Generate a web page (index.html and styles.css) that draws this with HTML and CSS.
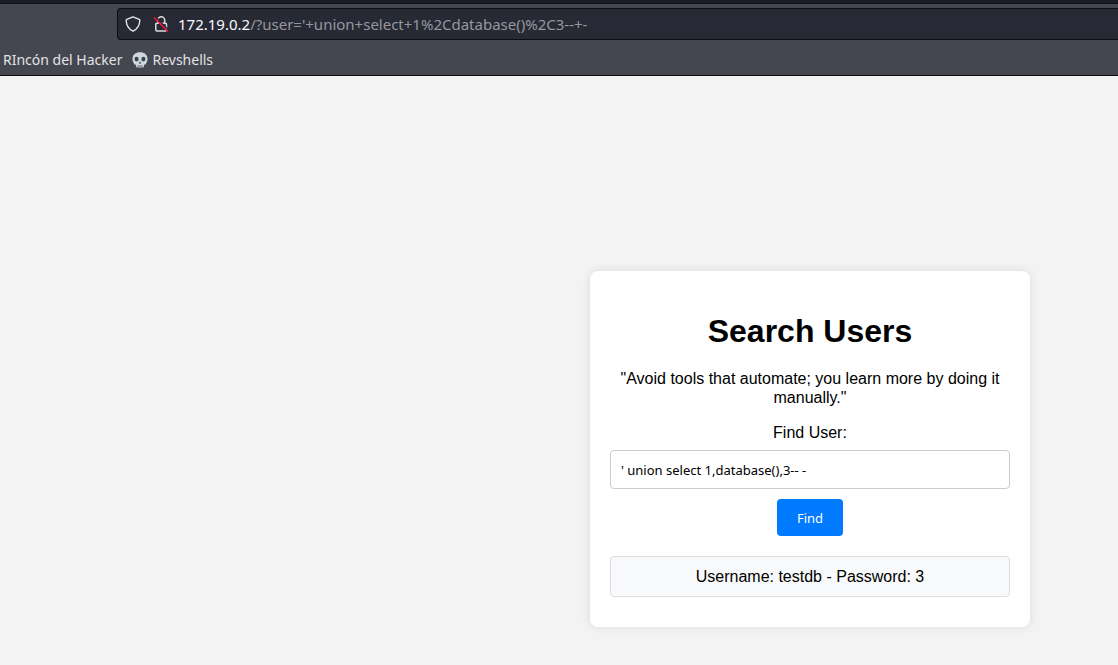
FILE: index.html
```html
<!DOCTYPE html>
<html lang="en">
<head>
<meta charset="utf-8">
<title>Search Users</title>
<link rel="stylesheet" href="styles.css">
</head>
<body>
<header class="browser">
  <div class="toolbar">
    <div class="urlbar">
      <span class="indicators">
        <svg class="icon" viewBox="0 0 16 16" aria-hidden="true">
          <path d="M8 .8 14.2 3.3c.5.2.6.5.6 1-.1 4.8-1.700 8.500-6.800 10.900C2.900 12.800 1.300 9.100 1.200 4.300c0-.5.1-.8.6-1Z" fill="none" stroke="#e4e4e6" stroke-width="1.400" stroke-linejoin="round"/>
        </svg>
        <svg class="icon" viewBox="0 0 16 16" aria-hidden="true">
          <path d="M4.700 7V4.200a3.500 3.500 0 0 1 7 0V7M3.800 7.200h8.700a1 1 0 0 1 1 1v5.800a1 1 0 0 1-1 1H3.800a1 1 0 0 1-1-1V8.200a1 1 0 0 1 1-1Z" fill="none" stroke="#dcdcdf" stroke-width="1.500"/>
          <path d="M2 .4 15.800 14.300" stroke="#272a35" stroke-width="1.400"/>
          <path d="M.8 1.300 14.800 15.500" stroke="#f0133f" stroke-width="1.600"/>
        </svg>
      </span>
      <span class="url"><span class="host">172.19.0.2</span>/?user='+union+select+1%2Cdatabase()%2C3--+-</span>
    </div>
  </div>
  <nav class="bookmarks" aria-label="Bookmarks">
    <a href="#">RIncón del Hacker</a>
    <a href="#">
      <svg class="icon" viewBox="0 0 16 16" aria-hidden="true">
        <path d="M8 .2C3.500.2.500 2.800.500 6.800c0 1.800.4 3 1.100 3.900.4.500.3 1.200.7 1.500.5.400 1.300.2 1.600.7.300.6.100 1.900.5 2.400.6.600 6.600.6 7.200 0 .4-.5.200-1.800.5-2.400.3-.5 1.100-.3 1.600-.7.400-.3.300-1 .7-1.500.7-.9 1.100-2.100 1.100-3.900C15.500 2.800 12.500.2 8 .2Z" fill="#cfd8dd"/>
        <ellipse cx="4.600" cy="7.100" rx="2.100" ry="2.300" fill="#37474f"/>
        <ellipse cx="11.400" cy="7.100" rx="2.100" ry="2.300" fill="#37474f"/>
        <path d="m8 9.300 1.300 2.100H6.700ZM5.700 13.300h.8v2.500h-.8zM7.600 13.300h.8v2.500h-.8zM9.500 13.300h.8v2.500h-.8z" fill="#37474f"/>
      </svg>
      Revshells
    </a>
  </nav>
</header>
<main class="page">
  <section class="card">
    <h1>Search Users</h1>
    <p>"Avoid tools that automate; you learn more by doing it manually."</p>
    <form class="search">
      <label for="user">Find User:</label>
      <input type="text" id="user" name="user" value="' union select 1,database(),3-- -">
      <button type="button">Find</button>
    </form>
    <div class="result">Username: testdb - Password: 3</div>
  </section>
</main>
</body>
</html>
```

FILE: styles.css
```css
* {
  box-sizing: border-box;
}

body {
  margin: 0;
  min-height: 100vh;
  background: #f3f3f3;
  color: #000;
  font: 16px/19px "Liberation Sans", Arial, sans-serif;
}

.browser {
  border-top: 3px solid #1b1c24;
  border-bottom: 1px solid #0c0c12;
  background: #44474f;
  font-family: "Noto Sans", sans-serif;
}

.toolbar {
  padding: 4px 0 4px 117px;
  border-top: 1px solid #101116;
}

.urlbar {
  display: flex;
  align-items: center;
  gap: 9px;
  height: 32px;
  padding-left: 7px;
  border: 1px solid #0d0e14;
  border-right: 0;
  border-radius: 4px 0 0 4px;
  background: #272a35;
}

.indicators {
  display: flex;
  gap: 12px;
}

.icon {
  flex: none;
  width: 16px;
  height: 16px;
}

.url {
  color: #96979d;
  font-size: 15px;
  white-space: nowrap;
}

.host {
  color: #fbfbfe;
}

.bookmarks {
  display: flex;
  gap: 10px;
  height: 31px;
  padding-left: 3px;
}

.bookmarks a {
  display: flex;
  align-items: center;
  gap: 4px;
  color: #e2e2e3;
  font-size: 14px;
  text-decoration: none;
  white-space: nowrap;
}

.page {
  display: flex;
  justify-content: flex-end;
  padding: 195px 88px 38px 20px;
}

.card {
  width: 440px;
  padding: 20px 20px 30px;
  border-radius: 8px;
  background: #fff;
  box-shadow: 0 0 10px rgba(0, 0, 0, 0.1);
  text-align: center;
}

h1 {
  margin: 22px 0 19px;
  font-size: 32px;
  line-height: 37px;
}

p {
  margin: 0 0 16px;
}

.search {
  display: flex;
  flex-direction: column;
  align-items: center;
}

.search input {
  width: 100%;
  height: 39px;
  margin: 8px 0 10px;
  padding: 10px;
  border: 1px solid #ccc;
  border-radius: 4px;
  background: #fff;
  color: #000;
  font: 13px "Noto Sans", sans-serif;
}

.search button {
  height: 37px;
  padding: 0 20px;
  border: 0;
  border-radius: 4px;
  background: #007bff;
  color: #fff;
  font: 13px "Noto Sans", sans-serif;
}

.result {
  margin-top: 20px;
  padding: 10px;
  border: 1px solid #ddd;
  border-radius: 4px;
  background: #f8f9fa;
}
```
